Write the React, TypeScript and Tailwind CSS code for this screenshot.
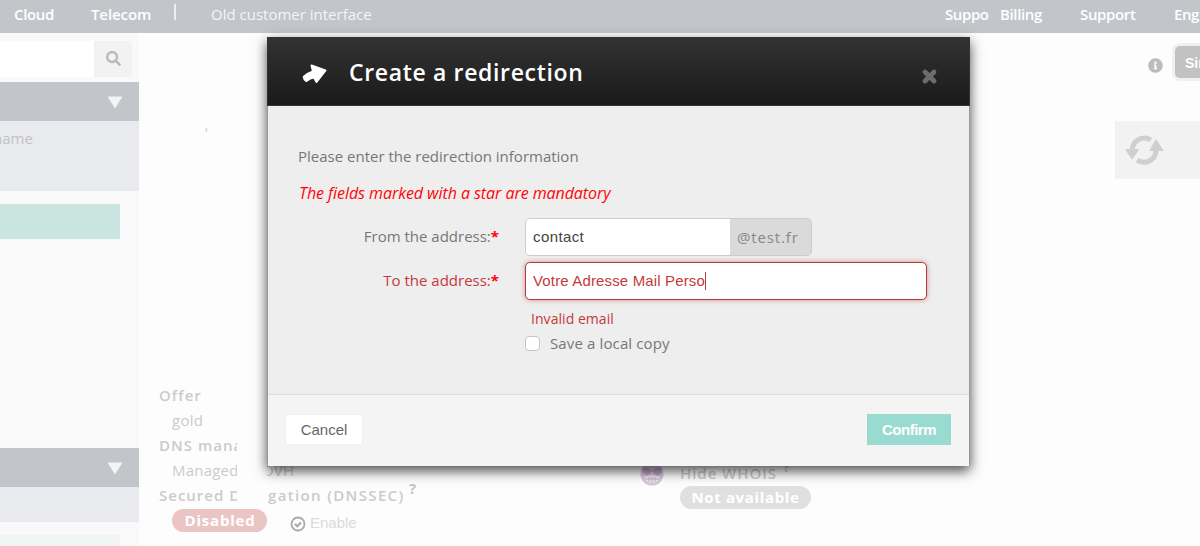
import type { ReactNode } from "react";
import { FaInfoCircle, FaSearch } from "react-icons/fa";

function NavItem({ className, children }: { className: string; children: ReactNode }) {
  return <span className={`shrink-0 whitespace-nowrap ${className}`}>{children}</span>;
}

function TopBar() {
  return (
    <header className="flex h-[33px] w-full shrink-0 items-start bg-[#c2c5ca] pl-[14px] pt-[4px] text-[15px] leading-[20px] text-white">
      <NavItem className="w-[77px] font-semibold tracking-[-0.35px]">Cloud</NavItem>
      <NavItem className="w-[83px] font-semibold tracking-[-0.1px]">Telecom</NavItem>
      <span className="h-[16px] w-[2px] shrink-0 bg-[#eeeff1]" />
      <NavItem className="ml-[35px] w-[734px] text-[#f4f5f6]">Old customer interface</NavItem>
      <NavItem className="w-[55px] font-semibold tracking-[-0.4px]">Suppo</NavItem>
      <NavItem className="w-[80px] font-semibold tracking-[-0.35px]">Billing</NavItem>
      <NavItem className="w-[94px] font-semibold tracking-[-0.35px]">Support</NavItem>
      <NavItem className="w-[40px] font-semibold tracking-[-0.4px]">Eng</NavItem>
    </header>
  );
}

function SectionBar() {
  return (
    <div className="flex h-[39px] shrink-0 items-center justify-end bg-[#c2c5ca] pr-[16px] pt-[2px]">
      <svg width="16" height="13" viewBox="0 0 16 13" fill="#f4f4f5">
        <path d="M0.5 0.5h15L8 12.5z" />
      </svg>
    </div>
  );
}

function Sidebar() {
  return (
    <aside className="flex h-full w-[139px] shrink-0 flex-col bg-[#f9f9f9]">
      <div className="mt-[8px] flex h-[36px] shrink-0">
        <div className="w-[94px] bg-white" />
        <div className="flex w-[38px] items-center justify-center rounded-r bg-[#f2f2f2] pb-[2px]">
          <FaSearch size={15} color="#b9b9b9" />
        </div>
      </div>
      <div className="mt-[5px]">
        <SectionBar />
      </div>
      <div className="h-[70px] shrink-0 bg-[#e9eaed] pt-[6px] text-[15px] leading-[22px] text-[#c3c3c3]">
        <div className="-ml-[7px]">name</div>
      </div>
      <div className="mt-[13px] h-[35px] w-[120px] shrink-0 bg-[#cae4df]" />
      <div className="mt-[209px]">
        <SectionBar />
      </div>
      <div className="h-[35px] shrink-0 bg-[#e9eaed]" />
      <div className="mt-[13px] h-[12px] w-[120px] shrink-0 bg-[#f0f4f4]" />
    </aside>
  );
}

function RefreshIcon() {
  return (
    <svg width="40" height="32" viewBox="0 0 40 32" fill="none">
      <path d="M8.3 16A12 12 0 0 1 26.8 6" stroke="#cfcfcf" strokeWidth="5" />
      <path d="M32 16A12 12 0 0 1 13.2 26" stroke="#cfcfcf" strokeWidth="5" />
      <path d="M1.6 15.5h13L8.1 25z M26 16.5h13L32 5.800z" fill="#cfcfcf" stroke="#cfcfcf" strokeLinejoin="round" />
    </svg>
  );
}

function Domain() {
  return (
    <main className="flex min-w-0 flex-1 flex-col bg-[#fdfdfd] text-[15px] leading-[25px] text-[#cbcbcb]">
      <div className="flex h-[64px] shrink-0 items-start justify-end pt-[10px]">
        <FaInfoCircle className="mt-[15px] shrink-0" size={15} color="#bcbcbc" />
        <div className="ml-[9px] w-[28px] overflow-hidden">
          <div className="w-[80px] rounded-lg bg-[#f0f0f0] p-[3px]">
            <div className="h-[32px] rounded-[5px] bg-[#c2c2c2] pl-[10px] font-['Liberation_Sans'] text-[14px] font-bold leading-[34px] text-white">Sim</div>
          </div>
        </div>
      </div>
      <div className="flex h-[286px] shrink-0 items-start justify-between pt-[24px]">
        <span className="ml-[65px] -mt-[6px] font-['Liberation_Sans'] text-[16px] leading-[20px]">,</span>
        <div className="flex h-[58px] w-[85px] items-center bg-[#f2f2f2] pl-[9px]">
          <RefreshIcon />
        </div>
      </div>
      <div className="flex">
        <div className="w-[501px] shrink-0 pl-[20px] tracking-[1px]">
          <div className="font-semibold">Offer</div>
          <div className="pl-[13px] tracking-[0.3px]">gold</div>
          <div className="w-[78px] overflow-hidden whitespace-nowrap font-semibold">DNS management</div>
          <div className="flex pl-[13px] tracking-[0.2px]">
            <div className="w-[65px] overflow-hidden whitespace-nowrap">Managed</div>
            <div className="ml-[30px] w-[34px] overflow-hidden">
              <div className="-ml-[5px]">OVH</div>
            </div>
          </div>
          <div className="flex whitespace-nowrap font-semibold">
            <div className="w-[78px] overflow-hidden">Secured De</div>
            <div className="ml-[31px] w-[138px] tracking-[1.35px]">gation (DNSSEC)</div>
            <div className="-mt-[7px] ml-[3px] text-[15px] font-bold text-[#c5c5c5]">?</div>
          </div>
          <div className="flex h-[26px] items-start pl-[13px] pt-px">
            <div className="flex h-[23px] w-[95px] items-center justify-center rounded-full bg-[#ebc4c4] pl-px font-bold tracking-[0.8px] text-white">Disabled</div>
            <svg className="ml-[23px] mt-[7px]" width="16" height="16" viewBox="0 0 16 16" fill="none" stroke="#aaa">
              <circle cx="8" cy="8" r="6.500" strokeWidth="1.800" />
              <path d="M5 8l2.300 2.300L11 6.500" strokeWidth="2.200" />
            </svg>
            <div className="ml-[4px] mt-[1px] font-['Liberation_Sans'] tracking-normal text-[#dadada]">Enable</div>
          </div>
        </div>
        <div className="flex pt-[80px]">
          <svg className="mt-[-1px] shrink-0" width="24" height="24" viewBox="0 0 24 24">
            <circle cx="12" cy="12" r="11.500" fill="#d6c5dc" />
            <path d="M2 7q5-3 9 1h2q4-4 9-1-1 8-7 6l-3-4-3 4Q3 14 2 7z" fill="#bba3c5" />
            <path d="M4 15q8-4 16 0-2 6-8 6t-8-6z" fill="#eee5f0" />
            <path d="M5 17h14M9 15v5M12 15v6M15 15v5" stroke="#c8b0d0" />
          </svg>
          <div className="ml-[16px] whitespace-nowrap">
            <div className="flex h-[23px] font-semibold leading-[20px] tracking-[0.95px]">
              <span>Hide WHOIS</span>
              <span className="-mt-[7px] ml-[6px] font-bold">?</span>
            </div>
            <div className="flex h-[23px] w-[131px] items-center justify-center rounded-full bg-[#e0e0e0] font-bold tracking-[0.65px] text-white">Not available</div>
          </div>
        </div>
      </div>
    </main>
  );
}

function FieldLabel({ className, children }: { className: string; children: ReactNode }) {
  return (
    <label className={`w-[231px] shrink-0 text-right ${className}`}>
      {children}
      <span className="font-bold text-[#ff0505]">*</span>
    </label>
  );
}

function RedirectionDialog() {
  return (
    <section
      role="dialog"
      className="absolute left-[267px] top-[37px] flex h-[429px] w-[703px] flex-col border-x border-[#999] bg-[#eee] text-[15px] leading-[22px] text-[#777] shadow-[0_5px_12px_rgba(0,0,0,0.7)]"
    >
      <header className="-mx-px flex h-[69px] shrink-0 items-center border border-[#333] bg-linear-to-b from-[#333] to-[#1a1a1a] pl-[34px] pr-[31px]">
        <svg className="mt-[4px] shrink-0" width="26" height="20" viewBox="0 0 26 20" fill="white">
          <path
            d="M9.500 1.500L23.500 6.500L14.500 18L12 13.500Q8 14 4.500 17Q2 16 1.800 12.800Q5 9.500 11 7.500z"
            stroke="white"
            strokeWidth="2"
            strokeLinejoin="round"
          />
        </svg>
        <h1 className="ml-[21px] flex-1 text-[23px] font-semibold leading-[32px] tracking-[0.65px] text-white">Create a redirection</h1>
        <svg className="mt-[9px] shrink-0" width="17" height="17" viewBox="0 0 17 17" fill="none">
          <path d="M4 4l9 9M13 4l-9 9" stroke="#6c6c6c" strokeWidth="4.800" strokeLinecap="round" />
        </svg>
      </header>
      <div className="h-[288px] shrink-0 pt-[39px]">
        <p className="ml-[30px]">Please enter the redirection information</p>
        <p className="ml-[31px] mt-[15px] text-[16px] italic tracking-[-0.06px] text-[#ff0505]">The fields marked with a star are mandatory</p>
        <div className="mt-[14px] flex h-[38px] items-center">
          <FieldLabel className="pb-[3px]">From the address:</FieldLabel>
          <div className="ml-[26px] flex h-[38px] w-[287px] overflow-hidden rounded-[5px] border border-[#ccc] bg-[#dadada]">
            <div className="w-[204px] bg-white pl-[7px] font-['Liberation_Sans'] leading-[36px] tracking-[0.4px] text-[#444]">contact</div>
            <div className="pl-[7px] leading-[36px] tracking-[0.85px] text-[#888]">@test.fr</div>
          </div>
        </div>
        <div className="mt-[6px] flex h-[38px] items-center text-[#c43a3a]">
          <FieldLabel className="pb-[3px]">To the address:</FieldLabel>
          <div className="ml-[26px] flex h-[38px] w-[402px] items-center rounded-[5px] border border-[#b03d3d] bg-white pl-[7px] font-['Liberation_Sans'] tracking-[0.15px] shadow-[0_0_5px_rgba(200,80,80,0.65)]">
            Votre Adresse Mail Perso
            <span className="h-[18px] w-px bg-[#c43a3a]" />
          </div>
        </div>
        <p className="ml-[263px] mt-[8px] text-[14px] tracking-[0.05px] text-[#c43a3a]">Invalid email</p>
        <label className="ml-[257px] mt-[2px] flex items-center">
          <span className="h-[15px] w-[15px] rounded-[4px] border border-[#c5c5c5] bg-white" />
          <span className="ml-[10px] tracking-[0.13px]">Save a local copy</span>
        </label>
      </div>
      <footer className="flex flex-1 items-center justify-between border-t border-[#ddd] bg-[#f4f4f4] pl-[17px] pr-[18px] pb-[2px] font-['Liberation_Sans']">
        <button className="h-[31px] w-[78px] border border-[#f0f0f0] bg-white text-[#666]">Cancel</button>
        <button className="h-[31px] w-[84px] bg-[#9adbd1] font-bold tracking-[-0.5px] text-white">Confirm</button>
      </footer>
    </section>
  );
}

export default function App() {
  return (
    <div className="relative flex h-[546px] w-[1200px] flex-col overflow-hidden bg-[#fdfdfd] font-['Open_Sans',sans-serif]">
      <TopBar />
      <div className="flex h-[513px]">
        <Sidebar />
        <Domain />
      </div>
      <RedirectionDialog />
    </div>
  );
}
